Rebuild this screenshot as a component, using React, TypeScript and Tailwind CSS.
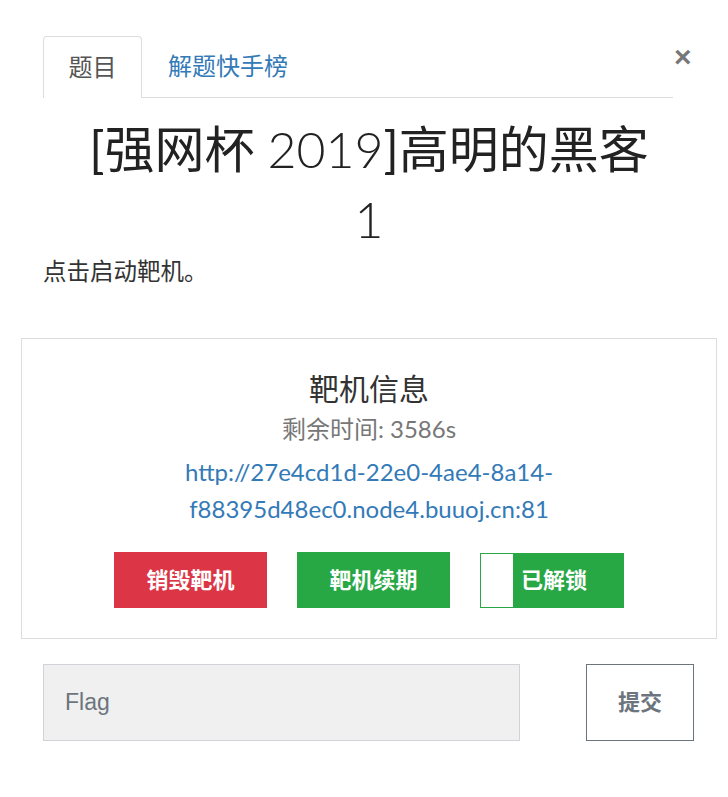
function Tabs() {
    return (
        <div className="relative flex h-[62px] pt-0">
            <div className="flex w-[99px] items-center justify-center rounded-t-[4px] border border-b-0 border-[#dddddd] bg-white text-[24px] text-[#555555]">
                题目
            </div>
            <div className="flex flex-1 items-center border-b border-[#dddddd] pl-[26px] text-[24px] text-[#337ab7]">
                解题快手榜
            </div>
        </div>
    )
}

function TargetCard() {
    return (
        <div className="ml-[-22px] mr-[-44px] border border-[#dddddd] bg-white pt-[29px] pb-[30px] text-center font-['Lato','Noto_Sans_CJK_SC',sans-serif]">
            <h3 className="text-[30px] leading-[40px] text-[#333333]">靶机信息</h3>
            <p className="mt-[5px] text-[24px] leading-[32px] text-[#777777]">剩余时间: 3586s</p>
            <a href="#" className="mx-auto mt-[8px] block w-[460px] text-[24px] leading-[37px] text-[#337ab7]">
                http://27e4cd1d-22e0-4ae4-8a14-
                <br/>
                f88395d48ec0.node4.buuoj.cn:81
            </a>
            <div className="mt-[25px] flex items-center justify-center gap-[30px] font-['Liberation_Sans','Noto_Sans_CJK_SC',sans-serif] text-[22px] font-bold text-white">
                <button className="h-[56px] w-[153px] bg-[#dc3545]">销毁靶机</button>
                <button className="h-[56px] w-[153px] bg-[#28a745]">靶机续期</button>
                <button className="flex h-[55px] w-[144px] items-stretch border border-[#28a745] bg-[#28a745]">
                    <span className="w-[32px] bg-white"></span>
                    <span className="flex flex-1 items-center pl-[8px]">已解锁</span>
                </button>
            </div>
        </div>
    )
}

export default function App() {
    return (
        <div className="relative min-h-[797px] w-[728px] bg-white font-['Liberation_Sans','Noto_Sans_CJK_SC',sans-serif]">
            <button className="absolute left-[674px] top-[42px] text-[30px] font-bold leading-[30px] text-[#777777]">×</button>
            <div className="ml-[43px] w-[630px] pt-[36px]">
                <Tabs/>
                {/* title is centred on the card, not on the tab row */}
                <h1 className="mr-[-22px] mt-[16px] text-center font-['Lato','Noto_Sans_CJK_SC',sans-serif] text-[50px] leading-[70px] text-[#222222]">
                    [强网杯 <span className="font-light">2019</span>]高明的黑客
                    <br/>
                    <span className="font-light">1</span>
                </h1>
                <p className="mt-[2px] text-[23.5px] leading-[32px] text-[#333333]">点击启动靶机。</p>
                <div className="mt-[50px]">
                    <TargetCard/>
                </div>
                <div className="mt-[25px] flex items-center">
                    <input
                        placeholder="Flag"
                        className="h-[77px] w-[477px] shrink-0 border border-[#d0d4d9] bg-[#f0f0f0] px-[21px] text-[23px] text-[#495057] placeholder:text-[#6c757d] outline-none"
                    />
                    <button className="ml-[66px] h-[77px] w-[108px] shrink-0 border border-[#6c757d] bg-white text-[22px] font-bold text-[#6c757d]">
                        提交
                    </button>
                </div>
            </div>
        </div>
    )
}
